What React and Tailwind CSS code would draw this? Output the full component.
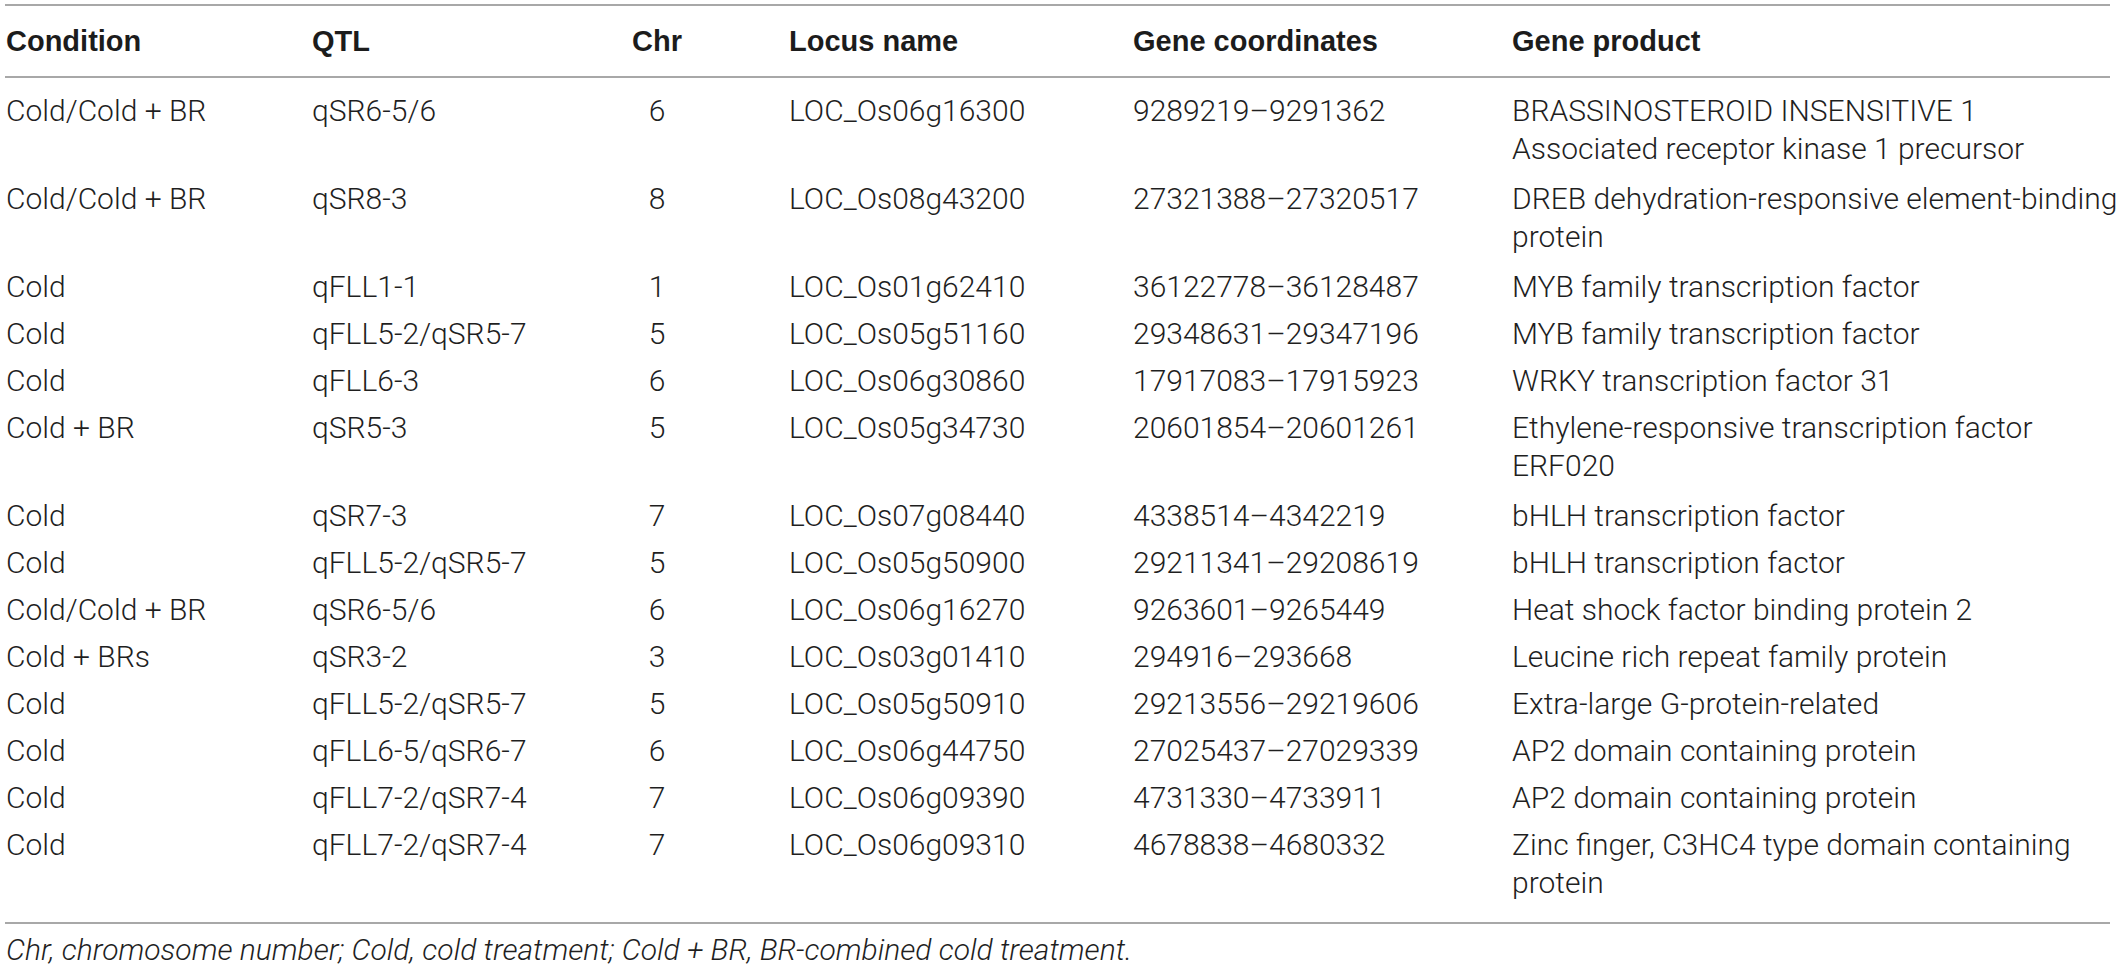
import React from "react";

const rows = [
  ["Cold/Cold + BR", "qSR6-5/6", "6", "LOC_Os06g16300", "9289219–9291362", ["BRASSINOSTEROID INSENSITIVE 1", "Associated receptor kinase 1 precursor"]],
  ["Cold/Cold + BR", "qSR8-3", "8", "LOC_Os08g43200", "27321388–27320517", ["DREB dehydration-responsive element-binding", "protein"]],
  ["Cold", "qFLL1-1", "1", "LOC_Os01g62410", "36122778–36128487", ["MYB family transcription factor"]],
  ["Cold", "qFLL5-2/qSR5-7", "5", "LOC_Os05g51160", "29348631–29347196", ["MYB family transcription factor"]],
  ["Cold", "qFLL6-3", "6", "LOC_Os06g30860", "17917083–17915923", ["WRKY transcription factor 31"]],
  ["Cold + BR", "qSR5-3", "5", "LOC_Os05g34730", "20601854–20601261", ["Ethylene-responsive transcription factor", "ERF020"]],
  ["Cold", "qSR7-3", "7", "LOC_Os07g08440", "4338514–4342219", ["bHLH transcription factor"]],
  ["Cold", "qFLL5-2/qSR5-7", "5", "LOC_Os05g50900", "29211341–29208619", ["bHLH transcription factor"]],
  ["Cold/Cold + BR", "qSR6-5/6", "6", "LOC_Os06g16270", "9263601–9265449", ["Heat shock factor binding protein 2"]],
  ["Cold + BRs", "qSR3-2", "3", "LOC_Os03g01410", "294916–293668", ["Leucine rich repeat family protein"]],
  ["Cold", "qFLL5-2/qSR5-7", "5", "LOC_Os05g50910", "29213556–29219606", ["Extra-large G-protein-related"]],
  ["Cold", "qFLL6-5/qSR6-7", "6", "LOC_Os06g44750", "27025437–27029339", ["AP2 domain containing protein"]],
  ["Cold", "qFLL7-2/qSR7-4", "7", "LOC_Os06g09390", "4731330–4733911", ["AP2 domain containing protein"]],
  ["Cold", "qFLL7-2/qSR7-4", "7", "LOC_Os06g09310", "4678838–4680332", ["Zinc finger, C3HC4 type domain containing", "protein"]],
];

const grid = "grid grid-cols-[307px_290px_110px_421px_379px_1fr]";

export default function App() {
  return (
    <div
      className="w-[2117px] h-[967px] overflow-hidden bg-white text-[#1f1f1f]"
      style={{ fontFamily: 'Roboto, "Liberation Sans", Arial, sans-serif' }}
    >
      <div className="ml-[5px] w-[2105px] pt-[4px]">
        <div className="h-[2px] bg-[#a8a8a8]" />
        {/* header */}
        <div
          className={`${grid} pt-[16px] pb-[16px] text-[29px] font-bold leading-[38px] text-[#1c1c1c]`}
          style={{ fontFamily: '"Liberation Sans", Arial, sans-serif' }}
        >
          <div className="pl-[1px]">Condition</div>
          <div>QTL</div>
          <div className="text-center">Chr</div>
          <div className="pl-[77px]">Locus name</div>
          <div>Gene coordinates</div>
          <div>Gene product</div>
        </div>
        <div className="h-[2px] bg-[#a8a8a8]" />
        <div className="pt-[9px] pb-[13px] text-[30px] font-light leading-[38px]">
          {rows.map((r, i) => (
            <div
              key={i}
              className={`${grid} pt-[5px] whitespace-nowrap ${r[5].length > 1 ? "pb-[7px]" : "pb-[4px]"}`}
            >
              <div className="pl-[1px]">{r[0]}</div>
              <div>{r[1]}</div>
              <div className="text-center">{r[2]}</div>
              <div className="pl-[77px]">{r[3]}</div>
              <div>{r[4]}</div>
              <div>
                {r[5].map((l, j) => (
                  <div key={j}>{l}</div>
                ))}
              </div>
            </div>
          ))}
        </div>
        <div className="h-[2px] bg-[#a8a8a8]" />
        <div className="pt-[10px] pl-[1px] text-[30px] font-light italic leading-[32px] whitespace-nowrap">
          Chr, chromosome number; Cold, cold treatment; Cold + BR, BR-combined cold treatment.
        </div>
      </div>
    </div>
  );
}
